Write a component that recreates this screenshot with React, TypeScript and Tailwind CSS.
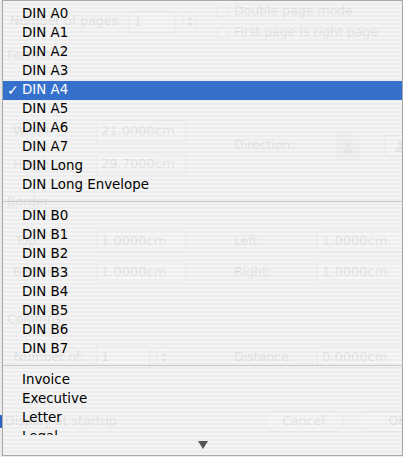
import React from 'react'

const groups = [
  ['DIN A0', 'DIN A1', 'DIN A2', 'DIN A3', 'DIN A4', 'DIN A5', 'DIN A6', 'DIN A7', 'DIN Long', 'DIN Long Envelope'],
  ['DIN B0', 'DIN B1', 'DIN B2', 'DIN B3', 'DIN B4', 'DIN B5', 'DIN B6', 'DIN B7'],
  ['Invoice', 'Executive', 'Letter', 'Legal'],
]

const selected = 'DIN A4'

function Field({ value, w }: { value: string; w: string }) {
  return (
    <div className={`${w} shrink-0 h-[22px] flex items-center pl-[4px] bg-white border border-[#8a8a8a] text-[13px]`}>
      {value}
    </div>
  )
}

function Stepper() {
  return (
    <div className="w-[13px] h-[22px] shrink-0 rounded-full border border-[#8a8a8a] bg-white flex flex-col items-center justify-center gap-[3px]">
      <svg width="6" height="4" viewBox="0 0 6 4"><polygon points="3,0 6,4 0,4" fill="#444" /></svg>
      <svg width="6" height="4" viewBox="0 0 6 4"><polygon points="0,0 6,0 3,4" fill="#444" /></svg>
    </div>
  )
}

function Check({ label }: { label: string }) {
  return (
    <div className="h-[21px] flex items-center gap-[6px]">
      <div className="w-[11px] h-[11px] border border-[#707070] bg-white rounded-[2px]" />
      <span className="whitespace-nowrap">{label}</span>
    </div>
  )
}

function PageIcon() {
  return (
    <svg width="24" height="30" viewBox="0 0 24 30" className="shrink-0">
      <path d="M0 0 H17 L24 7 V30 H0 Z" fill="#b8b8b8" />
      <path d="M17 0 V7 H24" fill="#d8d8d8" />
      <circle cx="12" cy="14" r="2.5" fill="#555" />
      <path d="M7 23 Q7 17.5 12 17.5 Q17 17.5 17 23 Z" fill="#555" />
    </svg>
  )
}

function LandscapeIcon() {
  return (
    <div className="w-[30px] h-[22px] shrink-0 border border-[#8a8a8a] bg-white flex items-center justify-center relative">
      <svg width="12" height="12" viewBox="0 0 12 12">
        <circle cx="6" cy="3" r="2.4" fill="#555" />
        <path d="M1 12 Q1 6 6 6 Q11 6 11 12 Z" fill="#555" />
      </svg>
      <span className="absolute top-[-3px] right-[3px] text-[8px]">1</span>
    </div>
  )
}

function Dialog() {
  return (
    <div className="flex flex-col text-[12.5px] text-black">
      <div className="flex h-[43px]">
        <div className="flex items-center pl-[10px] h-[43px] shrink-0">
          <span className="w-[119px] shrink-0">Number of pages:</span>
          <Field value="1" w="w-[46px]" />
          <div className="ml-[8px]">
            <Stepper />
          </div>
        </div>
        <div className="ml-[21px] flex flex-col pt-[1px] shrink-0">
          <Check label="Double page mode" />
          <Check label="First page is right page" />
        </div>
      </div>

      <div className="h-[24px] flex items-center pl-[7px]">Format</div>
      <div className="h-[53px]" />

      <div className="flex h-[55px]">
        <div className="w-[234px] shrink-0 flex flex-col gap-[11px]">
          <div className="flex items-center">
            <span className="w-[96px] shrink-0 pl-[13px]">Width:</span>
            <Field value="21.0000cm" w="w-[90px]" />
          </div>
          <div className="flex items-center">
            <span className="w-[96px] shrink-0 pl-[13px]">Height:</span>
            <Field value="29.7000cm" w="w-[90px]" />
          </div>
        </div>
        <div className="flex items-center pb-[4px] shrink-0">
          <span className="w-[102px] shrink-0">Direction:</span>
          <PageIcon />
          <div className="ml-[25px] shrink-0">
            <LandscapeIcon />
          </div>
        </div>
      </div>

      <div className="h-[15px]" />
      <div className="h-[24px] flex items-center pl-[7px]">Border</div>
      <div className="h-[16px]" />

      <div className="flex flex-col gap-[9px]">
        <div className="flex items-center">
          <span className="w-[96px] shrink-0 pl-[15px]">Top:</span>
          <Field value="1.0000cm" w="w-[90px]" />
          <span className="ml-[48px] w-[83px] shrink-0">Left:</span>
          <Field value="1.0000cm" w="w-[90px]" />
        </div>
        <div className="flex items-center">
          <span className="w-[96px] shrink-0 pl-[13px]">Bottom:</span>
          <Field value="1.0000cm" w="w-[90px]" />
          <span className="ml-[48px] w-[83px] shrink-0">Right:</span>
          <Field value="1.0000cm" w="w-[90px]" />
        </div>
      </div>

      <div className="h-[24px]" />
      <div className="h-[24px] flex items-center pl-[7px]">Columns</div>
      <div className="h-[16px]" />

      <div className="flex items-center h-[20px]">
        <span className="w-[96px] shrink-0 pl-[14px]">Number of:</span>
        <Field value="1" w="w-[54px]" />
        <div className="ml-[7px] shrink-0">
          <Stepper />
        </div>
        <span className="ml-[64px] w-[83px] shrink-0">Distance:</span>
        <Field value="0.0000cm" w="w-[90px]" />
      </div>

      <div className="h-[44px]" />

      <div className="flex items-center h-[21px]">
        <div className="ml-[-10px] w-[13px] h-[13px] shrink-0 rounded-[2px] bg-[#2f63c4]" />
        <span className="ml-[2px] whitespace-nowrap">Display at startup</span>
        <div className="ml-auto mr-[-35px] flex gap-[13px] shrink-0">
          <div className="w-[81px] h-[21px] rounded-full border border-[#8a8a8a] bg-white flex items-center justify-center">Cancel</div>
          <div className="w-[81px] h-[21px] rounded-full border border-[#8a8a8a] bg-white flex items-center justify-center">OK</div>
        </div>
      </div>
    </div>
  )
}

function Menu() {
  return (
    <div className="absolute left-[2px] top-0 w-[401px] h-[456px] border border-[#a9a9a9] flex flex-col bg-[repeating-linear-gradient(180deg,rgba(245,245,245,0.93)_0px,rgba(245,245,245,0.93)_2px,rgba(237,237,237,0.93)_2px,rgba(237,237,237,0.93)_4px)] text-[13.4px] text-black">
      <div className="h-[434px] overflow-hidden pt-[4px]">
        {groups.map((items, gi) => (
          <div key={gi}>
            {gi > 0 && (
              <div className="h-[12px] flex items-center">
                <div className="h-px w-full bg-[#c8c8c8]" />
              </div>
            )}
            {items.map((item) => {
              const on = item === selected
              return (
                <div
                  key={item}
                  className={`h-[19px] flex items-center pl-[19px] relative ${on ? 'bg-[#3470cc] text-white' : ''}`}
                >
                  {on && <span className="absolute left-[4px] text-[14px] font-bold">✓</span>}
                  {item}
                </div>
              )
            })}
          </div>
        ))}
      </div>
      <div className="h-[20px] flex items-center justify-center">
        <svg width="10" height="8" viewBox="0 0 10 8">
          <polygon points="0,0 10,0 5,8" fill="#555" />
        </svg>
      </div>
    </div>
  )
}

export default function App() {
  return (
    <div className="w-[403px] h-[457px] relative overflow-hidden font-['DejaVu_Sans','Liberation_Sans',sans-serif] bg-[repeating-linear-gradient(180deg,#ededed_0px,#ededed_2px,#e5e5e5_2px,#e5e5e5_4px)]">
      <Dialog />
      <Menu />
    </div>
  )
}
